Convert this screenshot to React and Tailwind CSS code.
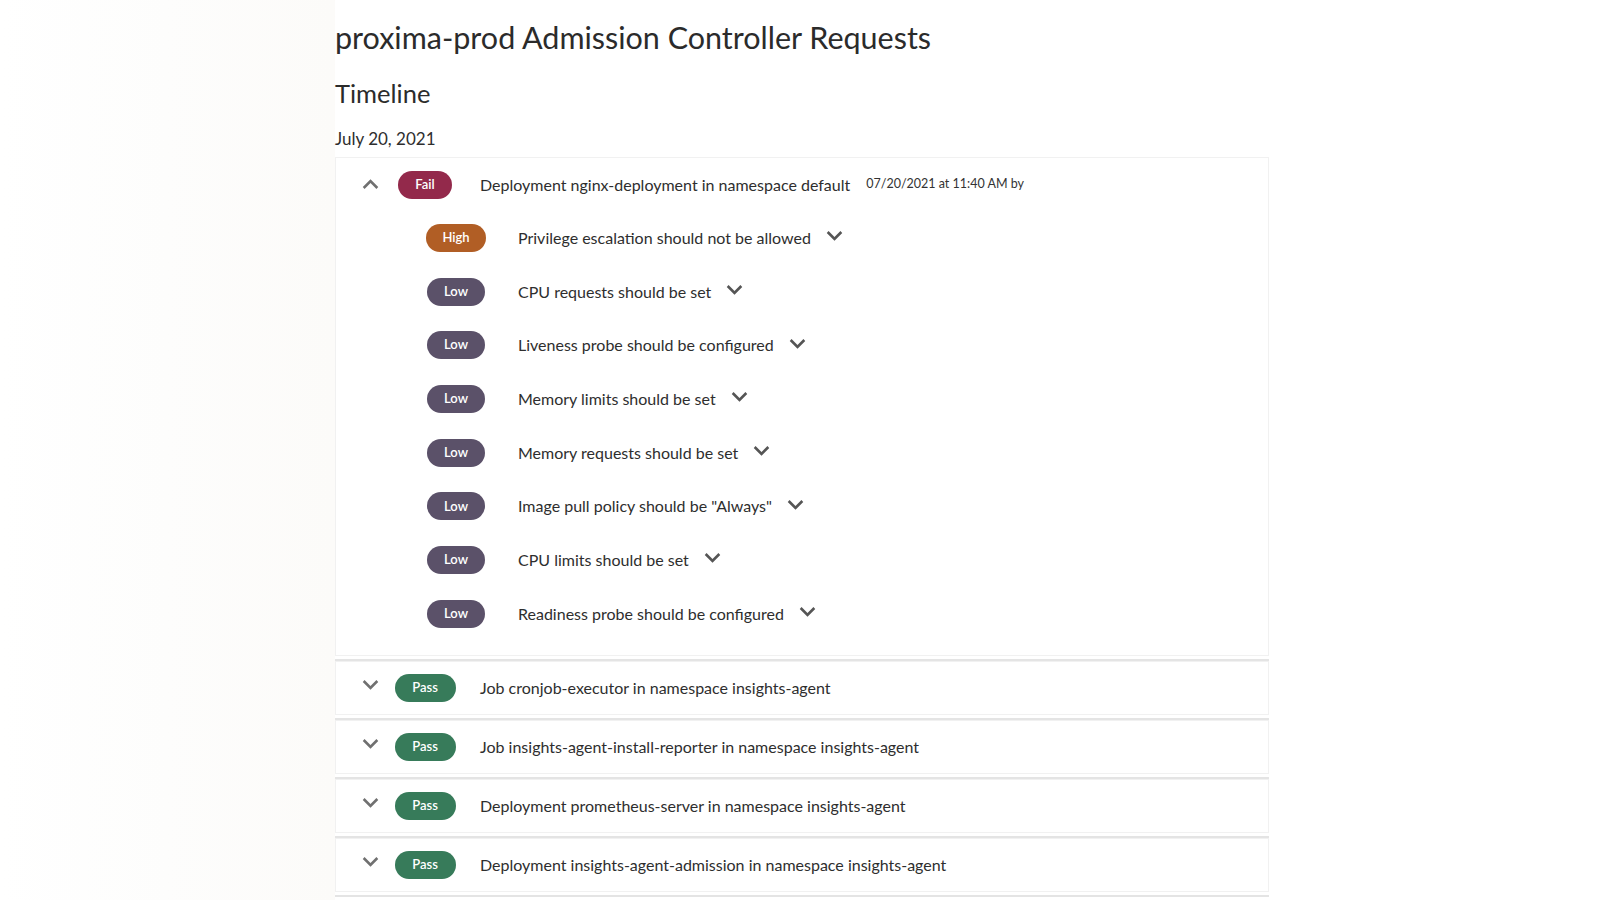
import React from "react";

const checks = [
  { level: "High", text: "Privilege escalation should not be allowed" },
  { level: "Low", text: "CPU requests should be set" },
  { level: "Low", text: "Liveness probe should be configured" },
  { level: "Low", text: "Memory limits should be set" },
  { level: "Low", text: "Memory requests should be set" },
  { level: "Low", text: 'Image pull policy should be "Always"' },
  { level: "Low", text: "CPU limits should be set" },
  { level: "Low", text: "Readiness probe should be configured" },
];

const passed = [
  "Job cronjob-executor in namespace insights-agent",
  "Job insights-agent-install-reporter in namespace insights-agent",
  "Deployment prometheus-server in namespace insights-agent",
  "Deployment insights-agent-admission in namespace insights-agent",
];

function Chevron({ up = false, className = "" }) {
  return (
    <svg viewBox="0 0 24 24" className={className} fill="currentColor">
      {up ? (
        <path d="M12 8l-6 6 1.41 1.41L12 10.83l4.59 4.58L18 14z" />
      ) : (
        <path d="M16.59 8.59L12 13.17 7.41 8.59 6 10l6 6 6-6z" />
      )}
    </svg>
  );
}

function Badge({ label }) {
  const colors = {
    Fail: "bg-[#93294b] w-[54px]",
    Pass: "bg-[#377b5a] w-[61px]",
    High: "bg-[#b15e25] w-[60px]",
    Low: "bg-[#5b5169] w-[58px]",
  };
  return (
    <span
      className={`${colors[label]} inline-flex h-[28px] items-center justify-center rounded-full text-[13px] font-semibold text-white`}
    >
      {label}
    </span>
  );
}

function Divider() {
  return <div className="mt-[3px] h-[2px] bg-[#e4e4e4]" />;
}

export default function App() {
  return (
    <div
      className="flex min-h-screen bg-white text-[#2e2e2e]"
      style={{ fontFamily: "Lato, 'Noto Sans', sans-serif" }}
    >
      <aside className="w-[335px] shrink-0 bg-gradient-to-r from-white via-[#fdfdfc] to-[#fcfbf9]" />

      <main className="w-[934px] shrink-0">
        <h1 className="pt-[17px] text-[30.5px] leading-[40px] text-[#2b2b2b]">
          proxima-prod Admission Controller Requests
        </h1>
        <h2 className="mt-[20px] text-[25.5px] leading-[32px] text-[#2b2b2b]">Timeline</h2>
        <p className="mt-[19px] text-[17px] leading-[22px]">July 20, 2021</p>

        {/* Failed request, expanded */}
        <section className="mt-[7px] border border-[#f1f1f1] pb-[14px]">
          <div className="flex h-[53px] items-center">
            <div className="ml-[18px] flex w-[32px] justify-center">
              <Chevron up className="h-[31px] w-[31px] text-[#707070]" />
            </div>
            <div className="flex w-[78px] justify-center">
              <Badge label="Fail" />
            </div>
            <span className="ml-[16px] text-[16px]">Deployment nginx-deployment in namespace default</span>
            <span className="ml-[16px] text-[12.5px] text-[#333]">07/20/2021 at 11:40 AM by</span>
          </div>

          <ul>
            {checks.map((c) => (
              <li key={c.text} className="flex h-[53.7px] items-center">
                <div className="ml-[82px] flex w-[76px] justify-center">
                  <Badge label={c.level} />
                </div>
                <span className="ml-[24px] text-[16px]">{c.text}</span>
                <Chevron className="ml-[8px] -mt-[4px] h-[31px] w-[31px] text-[#555]" />
              </li>
            ))}
          </ul>
        </section>
        <Divider />

        {passed.map((p) => (
          <div key={p}>
            <div className="flex h-[54px] items-center border border-[#f1f1f1]">
              <div className="ml-[18px] -mt-[6px] flex w-[32px] justify-center">
                <Chevron className="h-[31px] w-[31px] text-[#707070]" />
              </div>
              <div className="flex w-[78px] justify-center">
                <Badge label="Pass" />
              </div>
              <span className="ml-[16px] text-[16px]">{p}</span>
            </div>
            <Divider />
          </div>
        ))}
      </main>
    </div>
  );
}
